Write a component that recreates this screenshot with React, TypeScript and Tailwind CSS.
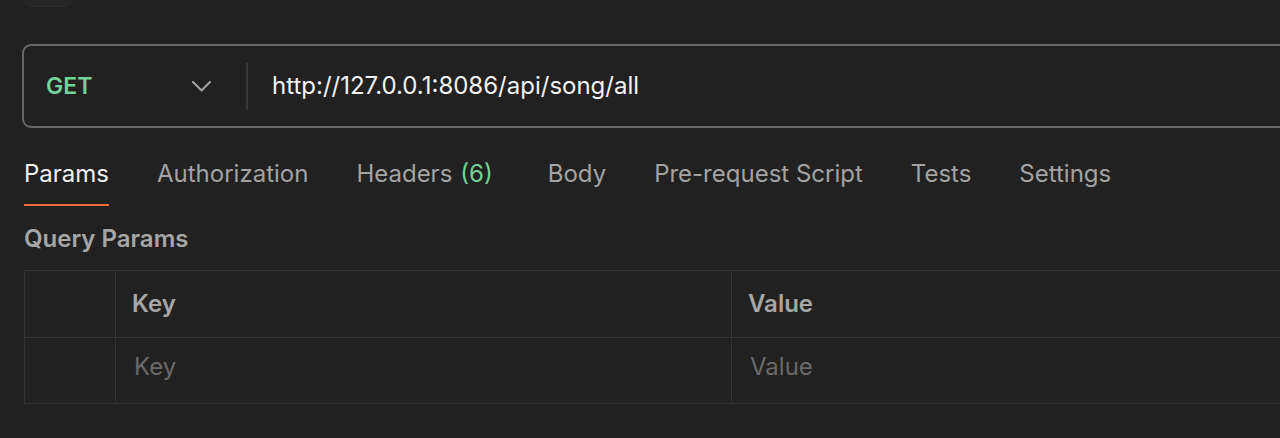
const tabs = [
  { name: 'Params', active: true },
  { name: 'Authorization' },
  { name: 'Headers', count: '(6)' },
  { name: 'Body' },
  { name: 'Pre-request Script' },
  { name: 'Tests' },
  { name: 'Settings' },
];

export default function App() {
  return (
    <div
      className="h-[438px] w-[1280px] overflow-hidden bg-[#212121] text-[#e6e6e6]"
      style={{ fontFamily: 'Inter, "Noto Sans", sans-serif' }}
    >
      {/* cut-off button above the request bar */}
      <div className="-mt-[30px] ml-[23px] h-[37px] w-[50px] rounded-[8px] border border-[#2e2e2e] bg-[#262626]" />

      {/* Request bar */}
      <div className="ml-[22px] mt-[37px] flex h-[84px] w-[1300px] items-center rounded-[9px] border-2 border-[#676767]">
        <div className="flex w-[222px] items-center justify-between pl-[22px] pr-[35px]">
          <span className="text-[23px] font-semibold text-[#74d199]">GET</span>
          <svg width="19" height="11" viewBox="0 0 19 11" fill="none" className="text-[#a3a3a3]">
            <path d="M1 1 L9.5 9.5 L18 1" stroke="currentColor" strokeWidth="2" strokeLinecap="round" strokeLinejoin="round" />
          </svg>
        </div>
        <div className="h-[47px] w-[2px] bg-[#383838]" />
        <span className="pl-[24px] text-[24px] text-[#f2f2f2]">http://127.0.0.1:8086/api/song/all</span>
      </div>

      {/* Tabs */}
      <div className="ml-[24px] mt-[31px] flex items-start gap-[48px]">
        {tabs.map((t) => (
          <div key={t.name} className={`flex flex-col ${t.count ? 'mr-[7px]' : ''}`}>
            <span className={`text-[24px] leading-[30px] ${t.active ? 'text-[#f0f0f0]' : 'text-[#a3a3a3]'}`}>
              {t.name}
              {t.count && <span className="ml-[8px] text-[#74d199]">{t.count}</span>}
            </span>
            <div className={`mt-[15px] h-[2px] ${t.active ? 'bg-[#f26b3a]' : 'bg-transparent'}`} />
          </div>
        ))}
      </div>

      <div className="ml-[24px] mt-[19px] text-[24px] font-semibold leading-[28px] text-[#a6a6a6]">Query Params</div>

      {/* Table */}
      <div className="ml-[24px] mt-[17px] w-[1300px] border border-[#333333]">
        <div className="flex h-[67px] border-b border-[#333333]">
          <div className="w-[91px] border-r border-[#333333]" />
          <div className="flex w-[616px] items-center border-r border-[#333333] pl-[16px] text-[24px] font-semibold text-[#a6a6a6]">Key</div>
          <div className="flex flex-1 items-center pl-[16px] text-[24px] font-semibold text-[#a6a6a6]">Value</div>
        </div>
        <div className="flex h-[65px]">
          <div className="w-[91px] border-r border-[#333333]" />
          <div className="flex w-[616px] items-center border-r border-[#333333] pb-[8px] pl-[18px] text-[24px] text-[#6a6a6a]">Key</div>
          <div className="flex flex-1 items-center pb-[8px] pl-[18px] text-[24px] text-[#6a6a6a]">Value</div>
        </div>
      </div>
    </div>
  );
}
